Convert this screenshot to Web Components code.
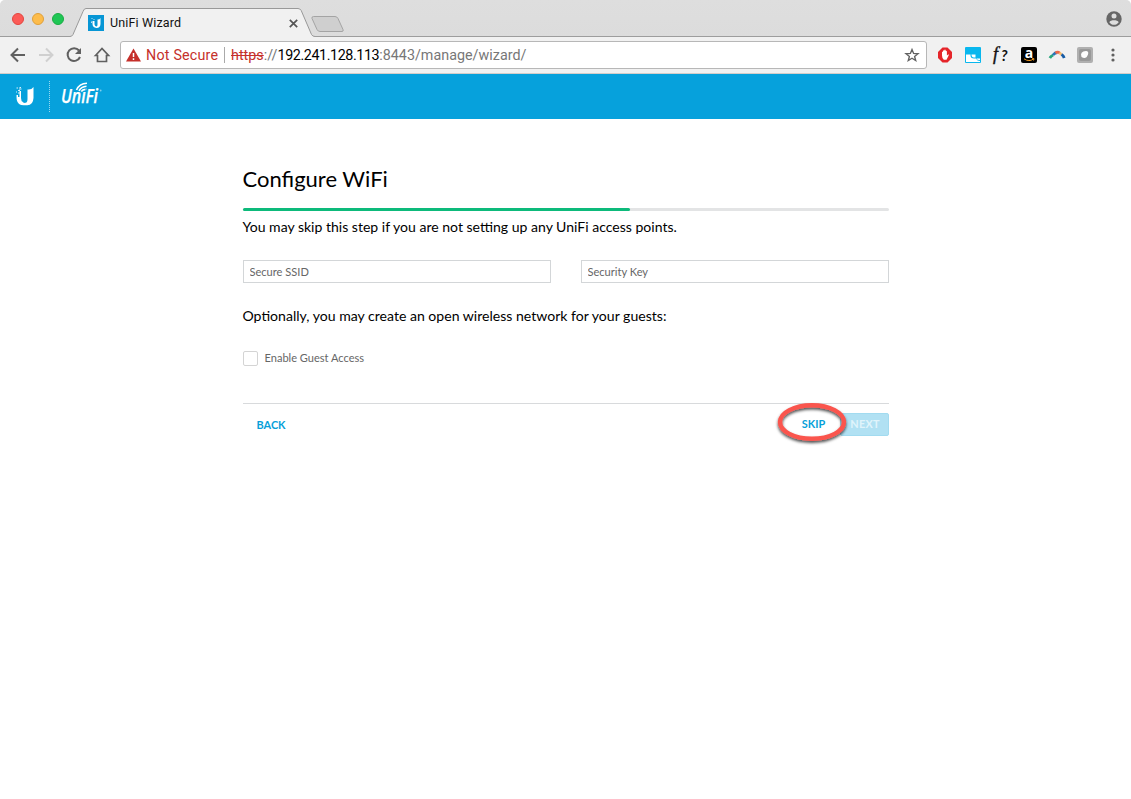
<!DOCTYPE html>
<html lang="en">
<head>
<meta charset="utf-8">
<title>UniFi Wizard</title>
<style>
html,body{margin:0;height:100%;overflow:hidden;background:#fff}
body{font-family:Lato,sans-serif}
</style>
</head>
<body>
<browser-window>
  <tab-strip slot="tabs"><browser-tab>UniFi Wizard</browser-tab></tab-strip>
  <address-bar slot="toolbar"></address-bar>
  <unifi-header></unifi-header>
  <wizard-panel heading="Configure WiFi">
    <wizard-text>You may skip this step if you are not setting up any UniFi access points.</wizard-text>
    <field-row>
      <text-field label="Secure SSID"></text-field>
      <text-field label="Security Key"></text-field>
    </field-row>
    <wizard-text style="--size:14.070px">Optionally, you may create an open wireless network for your guests:</wizard-text>
    <check-option>Enable Guest Access</check-option>
    <wizard-actions slot="actions"></wizard-actions>
  </wizard-panel>
</browser-window>
<script>
const define = (name, html) => customElements.define(name, class extends HTMLElement {
  constructor() {
    super();
    const t = document.createElement('template');
    t.innerHTML = html;
    this.attachShadow({mode: 'open'}).append(t.content.cloneNode(true));
  }
  connectedCallback() {
    this.shadowRoot.querySelectorAll('[data-attr]').forEach(el => {
      const value = this.getAttribute(el.dataset.attr) || '';
      if (el.localName === 'input') el.placeholder = value;
      else el.textContent = value;
    });
  }
});

define('browser-window', `
<style>
:host{display:flex;flex-direction:column;height:100vh;background:#fff}
.chrome{border-radius:5px 5px 0 0;overflow:hidden;flex:none;background:#f1f1f1}
</style>
<div class="chrome"><slot name="tabs"></slot><slot name="toolbar"></slot></div>
<slot></slot>`);

define('tab-strip', `
<style>
:host{display:flex;height:37px;box-sizing:border-box;background:linear-gradient(#dedede,#dcdcdc);box-shadow:inset 0 -1px #9d9d9d}
.lights{display:flex;gap:8px;padding:13px 0 0 12px;width:58px;flex:none}
i{width:12px;height:12px;border-radius:50%;box-sizing:border-box;border:1px solid #e2463f;background:#fc5b57;flex:none}
i:nth-child(2){background:#fdbc4b;border-color:#dfa03b}
i:nth-child(3){background:#1fc655;border-color:#1aac43}
.new{margin:15px 0 0 -6px;flex:none}
.user{margin:11px 9px 0 auto;flex:none}
svg{display:block}
</style>
<div class="lights"><i></i><i></i><i></i></div>
<slot></slot>
<svg class="new" width="36" height="18" viewBox="0 0 36 18"><path d="M3.500 1.500H25q2 0 3 2l5 11q.8 2-1 2H10q-2 0-3-2L2 3.500Q1.500 1.500 3.500 1.500Z" fill="#cfcfcf" stroke="#a4a4a4"/></svg>
<svg class="user" width="16" height="16" viewBox="0 0 16 16"><circle cx="8" cy="8" r="7.700" fill="#666"/><circle cx="8" cy="5" r="2.500" fill="#dedede"/><path d="M3.300 11.200C4.500 8.600 11.500 8.600 12.700 11.200 10.500 14.600 5.500 14.600 3.300 11.200Z" fill="#dedede"/></svg>`);

define('browser-tab', `
<style>
:host{display:flex;position:relative;width:246px;height:37px;flex:none;font:12.500px/16px Roboto,sans-serif;color:#111}
.shape{position:absolute;inset:0}
.row{position:relative;display:flex;align-items:center;width:100%;padding:9px 18.500px 0 18px;height:28px}
span{margin-left:6px;letter-spacing:.15px}
.close{margin-left:auto}
</style>
<svg class="shape" width="246" height="37" viewBox="0 0 246 37"><path d="M0 36.500Q2 36.500 3 34.500L13 11.500Q14 8.500 16 8.500H228Q230 8.500 231.200 10.500L241.500 34.500Q242.500 36.500 245 36.500V37H0Z" fill="#f1f1f1"/><path d="M0 36.500Q2 36.500 3 34.500L13 11.500Q14 8.500 16 8.500H228Q230 8.500 231.200 10.500L241.500 34.500Q242.500 36.500 245 36.500" fill="none" stroke="#999"/></svg>
<div class="row">
<svg width="16" height="16" viewBox="0 0 16 16"><rect width="16" height="16" fill="#0796d5"/><path d="M4.500 6H6.500V9.500Q7 11.500 8.500 11.500 9.500 11.300 9.500 9.500V4.500Q11.800 4.500 12.500 3V9Q12.300 13 8.500 13 4.500 12.500 4.500 9Z" fill="#fff"/><path d="M3.500 3.500H4.500M5.500 4.500H6.500M3.500 6.500V8" stroke="#bde5f6"/></svg>
<span><slot></slot></span>
<svg class="close" width="9" height="9" viewBox="0 0 9 9"><path d="M.8.8 8.200 8.200M8.200.8.8 8.200" stroke="#555" stroke-width="1.700"/></svg>
</div>`);

define('address-bar', `
<style>
:host{display:flex;align-items:center;height:37px;box-sizing:border-box;background:#f1f1f1;border-bottom:1px solid #d2cdca;padding:0 10px;font:14.300px/20px Roboto,sans-serif}
svg{display:block;flex:none;overflow:visible}
.nav{display:flex;gap:12px;width:110px;flex:none}
.url{display:flex;align-items:center;box-sizing:border-box;width:807px;height:28px;border:1px solid #b7b7b7;border-radius:3px;background:#fff;padding:0 7px 0 5px;flex:none}
.warn{color:#c5302b;margin-left:5px;width:73px;white-space:nowrap;letter-spacing:.2px}
.sep{width:1px;height:16px;background:#aaa;margin:0 6px 0 5px}
.addr{color:#777;white-space:nowrap;letter-spacing:.02px}
s{color:#c5302b}b{font-weight:400;color:#000;letter-spacing:-.4px}
.star{margin-left:auto}
.ext{display:flex;gap:12px;margin-left:10px;align-items:center}
.fn{display:flex;width:16px;height:16px;line-height:16px;white-space:nowrap;color:#111}
.fn em{font:italic 700 15px/16px Lato,sans-serif;width:8px}
.fn em:first-child{font:italic 400 18px/14px "Liberation Serif",serif;-webkit-text-stroke:.4px #111;width:8px}
.az{display:block;position:relative;width:16px;height:16px;border-radius:2px;background:#000;color:#fff;font:700 14px/11px "Open Sans",sans-serif;text-align:center}
.az svg{position:absolute;left:0;top:0}
</style>
<div class="nav">
<svg width="16" height="16" viewBox="0 0 16 16" fill="none" stroke="#606060" stroke-width="2"><path d="M15 8H2M8 1.500 1.500 8 8 14.500"/></svg>
<svg width="16" height="16" viewBox="0 0 16 16" fill="none" stroke="#d0d0d0" stroke-width="2"><path d="M1 8H14M8 1.500 14.500 8 8 14.500"/></svg>
<svg width="16" height="16" viewBox="0 0 16 16"><path d="M13 3.500A6.400 6.400 0 1 0 14 10" fill="none" stroke="#606060" stroke-width="2"/><path d="M15 1V7H9Z" fill="#606060"/></svg>
<svg width="16" height="16" viewBox="0 0 16 16"><path d="M1.500 8.500 8 1.500 14.500 8.500H12.500V14.500H3.500V8.500Z" fill="none" stroke="#606060" stroke-width="1.700"/></svg>
</div>
<div class="url">
<svg width="15" height="14" viewBox="0 0 15 14"><path d="M7.500.5 15 13.500H0Z" fill="#c5302b"/><path d="M7.500 5V9M7.500 10.200V12" stroke="#fff" stroke-width="1.500"/></svg>
<span class="warn">Not Secure</span><span class="sep"></span>
<span class="addr"><s>https</s>://<b>192.241.128.113</b>:8443/manage/wizard/</span>
<svg class="star" width="14" height="14" viewBox="0 0 14 14"><path d="M7 1.500 8.600 5.400 13 5.700 9.600 8.400 10.700 12.500 7 10.200 3.300 12.500 4.400 8.400 1 5.700 5.400 5.400Z" fill="none" stroke="#626262" stroke-width="1.400"/></svg>
</div>
<div class="ext">
<svg width="16" height="16" viewBox="0 0 16 16"><path d="M5.500.5H10.500L15 5V11L10.500 15.500H5.500L1 11V5Z" fill="#e5252a"/><path d="M5 8.500V5Q5.500 4.200 6 5V3.700Q6.700 3 7.300 3.700V3Q8 2.200 8.700 3V4Q9.500 3.300 9.900 4.500V8.500L11.500 7.300Q12.200 7.600 11.500 8.700L9.500 12.700H6.800Q5 11 5 8.500Z" fill="#fff"/></svg>
<svg width="16" height="16" viewBox="0 0 16 16"><rect width="16" height="16" rx="1" fill="#09b7ee"/><path d="M1 7.500H5.500V9Q6 11.500 9 11.500H11Q12 14 15 14V15H1Z" fill="#fff"/><path d="M6.500 7.500H10.500V10.500H9Q6.500 10.500 6.500 7.500ZM11.500 11.500H15V13Q12.500 13.500 11.500 11.500Z" fill="#fff"/></svg>
<span class="fn"><em>f</em><em>?</em></span>
<span class="az">a<svg width="16" height="16" viewBox="0 0 16 16"><path d="M3 11.800Q8 15.300 12.500 12M11 11.700H13L12.500 13.500" fill="none" stroke="#f39a22"/></svg></span>
<svg width="16" height="16" viewBox="0 0 16 16" fill="none" stroke-width="2.800"><path d="M.8 11Q2 8.800 4.300 8" stroke="#28a57d"/><path d="M4 8Q6 5.500 8.500 5.500" stroke="#2c74b9"/><path d="M6.500 6Q9 4 11 6.500" stroke="#ed6848"/><path d="M10.500 5.500 12.500 8" stroke="#f6bd70"/><path d="M12.500 7.500Q14.500 8.500 15.200 11" stroke="#165ba5"/></svg>
<svg width="16" height="16" viewBox="0 0 16 16"><rect width="16" height="16" rx="2" fill="#b0b0b0"/><rect x="2" y="2" width="12" height="12" rx="2" fill="#999"/><path d="M4.500 10Q2.500 4.500 9 4 12 4 11 7.500 9 13 4.500 10Z" fill="#fff"/></svg>
<svg width="16" height="16" viewBox="0 0 16 16" fill="#606060"><circle cx="8" cy="3" r="1.600"/><circle cx="8" cy="8" r="1.600"/><circle cx="8" cy="13" r="1.600"/></svg>
</div>`);

define('unifi-header', `
<style>
:host{display:flex;height:45px;flex:none;background:#06a1dc;padding-left:15px}
svg{display:block;overflow:visible}.mark{margin-top:12px}
.line{height:31px;margin:7px 12px 0 15px;border-left:1px dotted #9ad8ef}
.word{margin-top:7px}
</style>
<svg class="mark" width="19" height="21" viewBox="0 0 19 21"><path d="M6 4.500V12Q6.500 18 11.500 19 3 20.300 1.800 14Q1.500 12 1.500 9H3V11H4.500V5H6ZM12.500 3.500Q16.500 4 18.500 1V12Q18 19.500 12 19.300 7.500 18.500 6.800 15 8.500 17.300 10.500 16.800 12.500 16.500 12.500 13Z" fill="#fff"/><path d="M1.500 2H3M4.500 1.500H6M3 4.500H5M1 6H2M4 3H6.500M3 7H5" stroke="#d7f1fb" stroke-width="1"/></svg>
<div class="line"></div>
<svg class="word" width="42" height="26" viewBox="0 0 42 26"><text x="-1" y="22" font-family="Open Sans,sans-serif" font-size="19" font-style="italic" font-weight="600" fill="#fff" stroke="#fff" stroke-width=".25" textLength="37" lengthAdjust="spacingAndGlyphs">UniFi</text><path d="M13.500 3H24V10.500H13.500Z" fill="#06a1dc"/><path d="M14.500 9Q17 2.500 25 2.200M17 9.800Q19 5.800 24.500 5.300M19.300 10.500Q20.500 8.600 23.500 8.400" fill="none" stroke="#fff" stroke-width="1.600"/><circle cx="38.700" cy="9.500" r=".9" fill="#81ceec"/></svg>`);

define('wizard-panel', `
<style>
:host{display:block;width:646px;margin:43px 0 0 243px;color:#000}
h1{font:400 22px/34px Lato,sans-serif;margin:0;height:34px;text-indent:-.5px}
.progress{height:3px;border-radius:2px;background:#e3e4e5;margin-top:12px}
.progress i{display:block;width:387px;height:3px;border-radius:2px;background:#0dba7b}
</style>
<h1 data-attr="heading"></h1>
<div class="progress"><i></i></div>
<slot></slot><slot name="actions"></slot>`);

define('wizard-text', `
<style>:host{display:block;font:400 var(--size,14.040px)/20px Lato,sans-serif;margin-top:6px;white-space:nowrap;text-indent:-.5px}</style><slot></slot>`);

define('field-row', `
<style>:host{display:grid;grid-template-columns:1fr 1fr;gap:30px;margin:23px 0}</style><slot></slot>`);

define('text-field', `
<style>
:host{display:block}
input{display:block;width:100%;height:23px;box-sizing:border-box;border:1px solid #d3d6d8;border-radius:0;background:#fff;margin:0;padding:0 5.500px 1px;font:400 11.080px/18px Lato,sans-serif;outline:0}
input::placeholder{color:#666;opacity:1}
</style><input data-attr="label">`);

define('check-option', `
<style>
:host{display:flex;align-items:center;height:16px;margin-top:24px;font:400 11.050px/16px Lato,sans-serif;color:#666;gap:6.500px}
i{width:15px;height:15px;box-sizing:border-box;border:1px solid #d4d4d4;border-radius:2px}
</style><i></i><span><slot></slot></span>`);

define('wizard-actions', `
<style>
:host{display:flex;align-items:flex-start;border-top:1px solid #d8dadc;margin-top:37px;padding-top:9px;font:700 10.900px/21px Lato,sans-serif;color:#069fd9}
.back{margin-left:13.500px;padding-top:1px}
.skip{position:relative;margin-left:auto;width:62px;text-align:center}
.ring{position:absolute;left:-9px;top:-15px;overflow:visible;z-index:1}
.next{box-sizing:border-box;width:49px;height:23px;border:1px solid #a2dbf0;border-radius:2px;background:#b1e1f3;color:#e0f4fb;line-height:20px;padding-left:1px;text-align:center;letter-spacing:.25px}
.label{position:relative;z-index:1;left:4.500px}
</style>
<span class="back">BACK</span>
<span class="skip"><svg class="ring" width="76" height="48" viewBox="0 0 76 48"><defs><filter id="shadow" x="-20%" y="-20%" width="140%" height="150%"><feDropShadow dx="0" dy="2" stdDeviation="1.500" flood-color="#000" flood-opacity=".7"/></filter></defs><ellipse cx="43" cy="24" rx="32" ry="16.800" fill="none" stroke="#fa544e" stroke-width="4.500" filter="url(#shadow)"/></svg><span class="label">SKIP</span></span>
<span class="next">NEXT</span>`);
</script>
</body>
</html>
